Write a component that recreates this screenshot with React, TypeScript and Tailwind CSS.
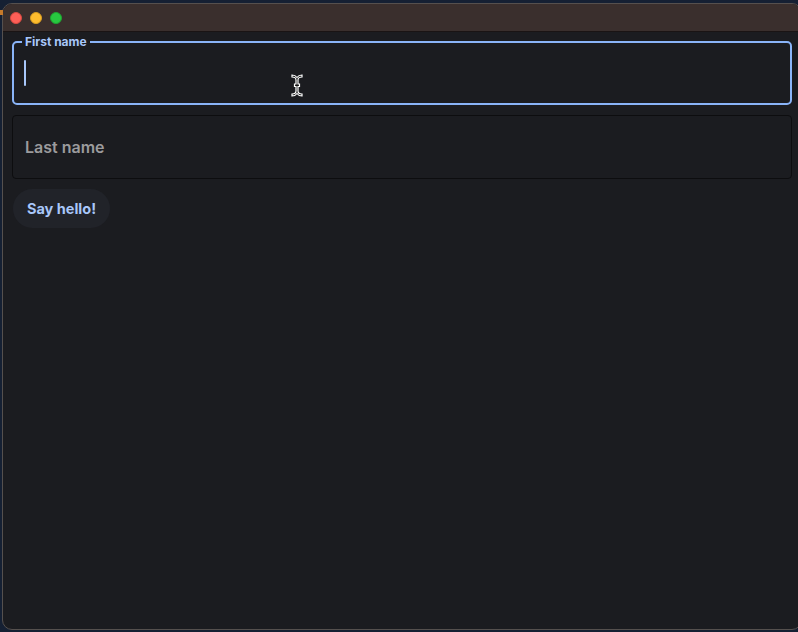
import React from "react";

export default function App() {
  return (
    <div className="w-[798px] h-[632px] bg-[#152033] overflow-hidden relative" style={{ fontFamily: "Inter, 'Noto Sans', sans-serif" }}>
      <div className="absolute left-0 top-[10px] w-[3px] h-[5px] bg-[#c77a2a]" />
      <div className="ml-[2px] mt-[3px] w-[800px] h-[627px] rounded-[10px] border border-[#55504e] overflow-hidden flex flex-col bg-[#1b1c20]">
        <div className="h-[28px] shrink-0 bg-[#3a2f2d] flex items-center gap-[8px] pl-[7px] border-b border-[#1a1414]">
          <span className="w-[12px] h-[12px] rounded-full bg-[#fe5f57] border border-[#d84a42]" />
          <span className="w-[12px] h-[12px] rounded-full bg-[#febc2e] border border-[#d99e22]" />
          <span className="w-[12px] h-[12px] rounded-full bg-[#28c840] border border-[#1fa431]" />
        </div>
        <div className="flex flex-col gap-[10px] pl-[9px] pt-[9px] relative">
          <div className="relative w-[780px] h-[64px] border-2 border-[#8ab4f8] rounded-[5px] flex items-center pl-[10px]">
            <span className="absolute -top-[8px] left-[8px] px-[3px] bg-[#1b1c20] text-[12px] leading-[14px] font-bold text-[#a8c7fa]">
              First name
            </span>
            <span className="w-[2px] h-[26px] bg-[#a8c7fa] rounded-full" />
          </div>
          <div className="w-[780px] h-[64px] border border-[#0d0d0f] rounded-[4px] flex items-center pl-[12px] bg-[#1b1c20]">
            <span className="text-[16px] font-semibold text-[#9b9b9d]">Last name</span>
          </div>
          <div>
            <button className="h-[39px] w-[97px] ml-[1px] rounded-full bg-[#212329] text-[14.5px] font-bold text-[#a8c7fa] flex items-center justify-center">
              Say hello!
            </button>
          </div>
          <svg className="absolute left-[287px] top-[41px]" width="14" height="25" viewBox="0 0 14 24">
            <path d="M2 1.5 C4.5 1.5 6 2.5 7 4 C8 2.5 9.5 1.5 12 1.5 L12 3.5 C9.5 3.5 8 4.5 8 6.5 L8 10.5 L9.5 10.5 L9.5 13 L8 13 L8 17.5 C8 19.5 9.5 20.5 12 20.5 L12 22.5 C9.5 22.5 8 21.5 7 20 C6 21.5 4.5 22.5 2 22.5 L2 20.5 C4.5 20.5 6 19.5 6 17.5 L6 13 L4.5 13 L4.5 10.5 L6 10.5 L6 6.5 C6 4.5 4.5 3.5 2 3.5 Z" fill="#111" stroke="#fff" strokeWidth="1.2" />
          </svg>
        </div>
      </div>
    </div>
  );
}
